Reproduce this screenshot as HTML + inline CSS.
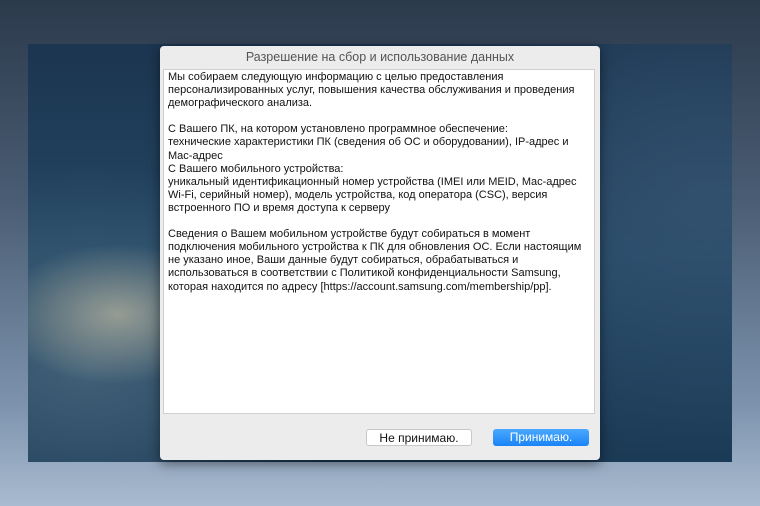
<!DOCTYPE html>
<html><head><meta charset="utf-8"><style>
body{margin:0;width:760px;height:506px;overflow:hidden;position:relative;
background:linear-gradient(180deg,#2c3a4c 0%,#4a5d74 40%,#7d93ad 80%,#a9bbd0 100%);font-family:"Liberation Sans",sans-serif}
.wall{position:absolute;left:28px;top:44px;width:704px;height:418px;
background:radial-gradient(ellipse 120px 70px at 90px 270px,rgba(210,200,170,.6),rgba(0,0,0,0) 100%),
radial-gradient(ellipse 260px 200px at 60px 320px,rgba(90,120,140,.6),rgba(0,0,0,0) 100%),
radial-gradient(ellipse 300px 260px at 680px 150px,rgba(60,90,120,.6),rgba(0,0,0,0) 100%),
linear-gradient(180deg,#1c3550,#234764 50%,#1b3a55);}
.dlg{position:absolute;left:160px;top:46px;width:440px;height:414px;background:#ececec;border-radius:4px;box-shadow:0 3px 12px rgba(0,0,0,.5)}
.title{position:absolute;top:0;left:0;right:0;height:22px;line-height:22px;text-align:center;font-size:12.5px;color:#555}
.box{position:absolute;left:3px;top:23px;width:432px;height:345px;background:#fff;border:1px solid #cfcfcf;box-sizing:border-box;padding:1px 4px;font-size:11px;line-height:13.1px;color:#111}
.btn{position:absolute;top:383px;height:17px;line-height:16px;text-align:center;font-size:12px;border-radius:3px}
.b1{left:206px;width:106px;background:#fff;border:1px solid #c8c8c8;box-sizing:border-box;color:#111}
.b2{left:333px;width:96px;background:linear-gradient(#4aa8ff,#1a84f6);color:#fff}
</style></head><body>
<div class="wall"></div>
<div class="dlg">
<div class="title">Разрешение на сбор и использование данных</div>
<div class="box">Мы собираем следующую информацию с целью предоставления<br>персонализированных услуг, повышения качества обслуживания и проведения<br>демографического анализа.<br><br>С Вашего ПК, на котором установлено программное обеспечение:<br>технические характеристики ПК (сведения об ОС и оборудовании), IP-адрес и<br>Mac-адрес<br>С Вашего мобильного устройства:<br>уникальный идентификационный номер устройства (IMEI или MEID, Mac-адрес<br>Wi-Fi, серийный номер), модель устройства, код оператора (CSC), версия<br>встроенного ПО и время доступа к серверу<br><br>Сведения о Вашем мобильном устройстве будут собираться в момент<br>подключения мобильного устройства к ПК для обновления ОС. Если настоящим<br>не указано иное, Ваши данные будут собираться, обрабатываться и<br>использоваться в соответствии с Политикой конфиденциальности Samsung,<br>которая находится по адресу [https://account.samsung.com/membership/pp].</div>
<div class="btn b1">Не принимаю.</div>
<div class="btn b2">Принимаю.</div>
</div>
</body></html>
